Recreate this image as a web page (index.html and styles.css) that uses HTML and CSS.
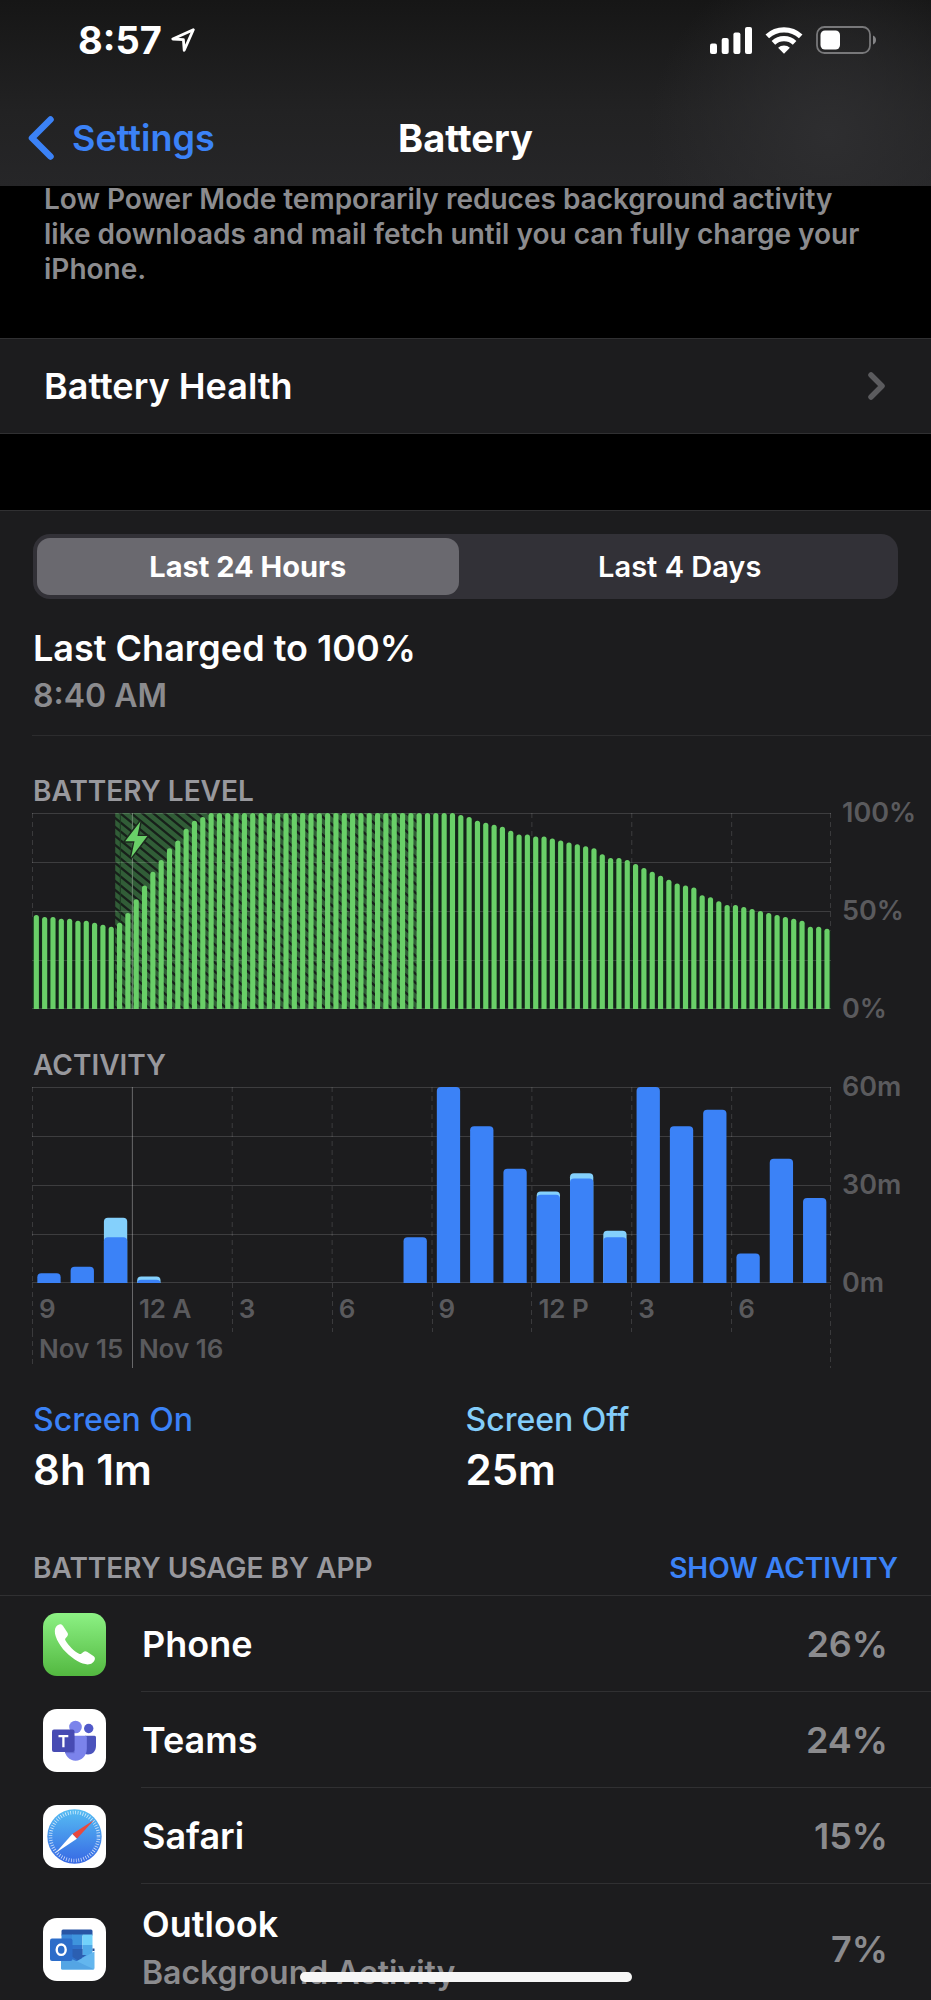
FILE: index.html
```html
<!DOCTYPE html>
<html lang="en">
<head>
<meta charset="utf-8">
<meta name="viewport" content="width=device-width, initial-scale=1">
<title>Battery</title>
<link rel="stylesheet" href="styles.css">
</head>
<body>
<div class="screen">
  <header class="topbar">
    <div class="status">
      <div class="status-left">
        <span class="clock">8:57</span>
        <svg class="location" viewBox="0 0 24 24" width="24" height="24" aria-hidden="true"><path d="M22.3 1.7 1.800 11l10.600.7.8 10.600z" fill="none" stroke="#fff" stroke-width="2.800" stroke-linejoin="round"/></svg>
      </div>
      <div class="status-right">
        <svg viewBox="0 0 42 27" width="42" height="27" aria-hidden="true"><g fill="#fff"><rect y="16.500" width="7" height="10.500" rx="2"/><rect x="11.700" y="11" width="7" height="16" rx="2"/><rect x="23.400" y="5.500" width="7" height="21.500" rx="2"/><rect x="35" width="7" height="27" rx="2"/></g></svg>
        <svg viewBox="0 0 38 27" width="38" height="27" aria-hidden="true"><g fill="none" stroke="#fff" stroke-width="5.200"><path d="M2.300 9.400a24.500 24.500 0 0 1 33.400 0"/><path d="M8.400 15.800a15.500 15.500 0 0 1 21.200 0"/></g><path d="M19 26.800l-5.900-6a8.600 8.600 0 0 1 11.800 0z" fill="#fff"/></svg>
        <svg viewBox="0 0 61 28" width="61" height="28" aria-hidden="true"><rect x="1" y="1" width="53" height="26" rx="7.500" fill="none" stroke="#78787a" stroke-width="1.800"/><rect x="4.500" y="4.500" width="19.500" height="19" rx="4.500" fill="#fff"/><path d="M57 9.500q3 1.200 3 4.500t-3 4.500z" fill="#858587"/></svg>
      </div>
    </div>
    <nav class="nav">
      <a class="back" href="#settings"><svg viewBox="0 0 26 44" width="26" height="44" aria-hidden="true"><path d="M22.500 3.500 4 22l18.500 18.500" fill="none" stroke="#3b82f7" stroke-width="6.500" stroke-linecap="round" stroke-linejoin="round"/></svg>Settings</a>
      <h1 class="title">Battery</h1>
    </nav>
  </header>

  <main class="content">
    <p class="note">Low Power Mode temporarily reduces background activity like downloads and mail fetch until you can fully charge your iPhone.</p>

    <a class="link-row" href="#health">Battery Health<svg viewBox="0 0 17 28" width="17" height="28" aria-hidden="true"><path d="M3 3l11 11L3 25" fill="none" stroke="#5b5b5e" stroke-width="5.500" stroke-linecap="round" stroke-linejoin="round"/></svg></a>

    <section class="panel">
      <div class="segmented">
        <button class="segment selected" type="button" aria-pressed="true">Last 24 Hours</button>
        <button class="segment" type="button" aria-pressed="false">Last 4 Days</button>
      </div>

      <div class="charged">
        <h2 class="charged-title">Last Charged to 100%</h2>
        <p class="charged-time">8:40 AM</p>
      </div>

      <div class="charts">
        <h3 class="caption">BATTERY LEVEL</h3>
        <div class="chart">
          <svg class="plot" id="level" role="img" aria-label="Battery level"></svg>
          <div class="scale"><span>100%</span><span>50%</span><span>0%</span></div>
        </div>

        <h3 class="caption">ACTIVITY</h3>
        <div class="chart">
          <div class="activity">
            <svg class="plot" id="activity" role="img" aria-label="Activity"></svg>
            <div class="hours"><span>9</span><span class="midnight">12 A</span><span>3</span><span>6</span><span>9</span><span>12 P</span><span>3</span><span>6</span></div>
            <div class="days"><span>Nov 15</span><span class="midnight">Nov 16</span></div>
          </div>
          <div class="scale"><span>60m</span><span>30m</span><span>0m</span></div>
        </div>
      </div>

      <div class="totals">
        <div><p class="total-label on">Screen On</p><p class="total">8h 1m</p></div>
        <div><p class="total-label off">Screen Off</p><p class="total">25m</p></div>
      </div>

      <div class="usage-head">
        <h3 class="caption">BATTERY USAGE BY APP</h3>
        <button class="toggle" type="button">SHOW ACTIVITY</button>
      </div>

      <ul class="apps">
        <li class="app">
          <svg class="app-icon" viewBox="0 0 63 63" aria-hidden="true">
            <defs><linearGradient id="gp" x2="0" y2="1"><stop stop-color="#8cf184"/><stop offset="1" stop-color="#53b840"/></linearGradient></defs>
            <rect width="63" height="63" rx="14" fill="url(#gp)"/>
            <path d="M12.200 15.500c1-2.300 2.800-4 4.800-4.200 1.300-.1 2.200.5 2.900 1.500l4.600 7c.8 1.300.6 2.400-.4 3.600l-1.500 1.900c-.6.8-.6 1.500-.1 2.300 1.600 2.800 3.700 5.300 6.100 7.600s5 4.200 7.500 5.500c.9.500 1.700.4 2.400-.2l1.900-1.600c1.100-.9 2.300-1 3.600-.1l6.400 4.300c1.300.9 1.800 1.900 1.400 3.300-.8 2.900-3.700 4.900-7 5-5.800.1-14.500-4.700-22-12.300C15.500 31.500 10.300 21.500 12.200 15.500z" fill="#fff"/>
          </svg>
          <div class="app-body"><span class="app-name">Phone</span><span class="share">26%</span></div>
        </li>
        <li class="app">
          <svg class="app-icon" viewBox="0 0 63 63" aria-hidden="true">
            <rect width="63" height="63" rx="14" fill="#fff"/>
            <circle cx="45.700" cy="19.500" r="4.700" fill="#5059c9"/>
            <path d="M42 26.700h9.500q1.500 0 1.500 1.500v8.800c0 5-3.700 8.500-8 8.500q-2 0-3.500-.7z" fill="#4b53bc"/>
            <circle cx="32.500" cy="18" r="6.300" fill="#7b83eb"/>
            <path d="M22 26.700h20.300q1.500 0 1.500 1.500V40c0 6.500-5 11.800-11.200 11.800S21.500 46.500 21.500 40z" fill="#7b83eb"/>
            <path d="M22 26.700h9.500v17.500H22z" fill="#464eb0" opacity=".45"/>
            <rect x="9" y="20.500" width="22.500" height="22.500" rx="2" fill="#474bb3"/>
            <path d="M15.500 27.200h9.800M20.400 27.200v11" stroke="#fff" stroke-width="2.300" fill="none"/>
          </svg>
          <div class="app-body"><span class="app-name">Teams</span><span class="share">24%</span></div>
        </li>
        <li class="app">
          <svg class="app-icon" viewBox="0 0 63 63" aria-hidden="true">
            <defs><linearGradient id="gs" x2="0" y2="1"><stop stop-color="#56bdf3"/><stop offset="1" stop-color="#3768e4"/></linearGradient></defs>
            <rect width="63" height="63" rx="14" fill="#fff"/>
            <circle cx="31.500" cy="31.500" r="27.200" fill="url(#gs)"/>
            <circle cx="31.500" cy="31.500" r="24" fill="none" stroke="#fff" stroke-width="3.600" stroke-dasharray=".8 1.713" opacity=".75"/>
            <path d="M51 15 29.300 28.900l4.600 4.800z" fill="#e8493f"/>
            <path d="M12.500 48 29.300 28.900l4.600 4.800z" fill="#fff"/>
          </svg>
          <div class="app-body"><span class="app-name">Safari</span><span class="share">15%</span></div>
        </li>
        <li class="app tall">
          <svg class="app-icon" viewBox="0 0 63 63" aria-hidden="true">
            <rect width="63" height="63" rx="14" fill="#fff"/>
            <path d="M20 11.500h28q1.500 0 1.500 1.500v4.500h-31V13q0-1.500 1.500-1.500z" fill="#2855a4"/>
            <path d="M18.500 16.500h11V46h-11z" fill="#3b88d8"/>
            <path d="M29 16.500h10.500V27H29z" fill="#3e94dd"/><path d="M39.500 16.500h10V27h-10z" fill="#72d2fb"/>
            <path d="M29 27h10.500v19H29z" fill="#2f71ca"/><path d="M39.500 27h10v19h-10z" fill="#4fa9e8"/>
            <path d="M49.500 30.500h2v2.500h-2z" fill="#234a91"/>
            <path d="M29 31h10.500v6h4L35 42.500 26.500 37H29z" fill="#2b5fb2"/>
            <path d="M51.500 33.500V50q0 1.500-1.500 1.500H19.500q-1.500 0-1.500-1.500V43l16 0z" fill="#63b6ee"/>
            <path d="M18 36 51 51.200 50 51.500H19.500q-1.500 0-1.500-1.500z" fill="#54a5e4"/>
            <rect x="7" y="20.500" width="22.500" height="22.500" rx="2" fill="#2c6dc9"/>
            <ellipse cx="18.200" cy="31.700" rx="4.500" ry="5.200" fill="none" stroke="#fff" stroke-width="2.400"/>
          </svg>
          <div class="app-body"><span class="app-name">Outlook<small>Background Activity</small></span><span class="share">7%</span></div>
        </li>
      </ul>
    </section>
  </main>
  <div class="home-bar"></div>
</div>
<script src="charts.js"></script>
</body>
</html>
```
FILE: styles.css
```css
* { box-sizing: border-box; margin: 0; padding: 0; }

body {
  background: #000;
  color: #fff;
  font-family: Inter, "Liberation Sans", sans-serif;
  font-weight: 600;
}

svg { display: block; flex: none; }
a { text-decoration: none; }
button { border: 0; background: none; color: inherit; font: inherit; }

.screen {
  height: 100vh;
  overflow-y: auto;
  scrollbar-width: none;
}

/* Status and navigation bars */
.topbar {
  position: sticky;
  top: 0;
  z-index: 2;
  background:
    radial-gradient(circle 180px at 89% 135px, #2e2e30, transparent),
    linear-gradient(#161616, #222223 60%, #262628);
}

.status {
  display: flex;
  justify-content: space-between;
  align-items: center;
  height: 80px;
  padding: 0 54px 0 78px;
}

.status-left { display: flex; align-items: center; gap: 9px; }
.status-right { display: flex; align-items: center; gap: 13px; }
.clock { font-size: 38px; font-weight: 700; }

.nav {
  display: grid;
  grid-template-columns: 1fr auto 1fr;
  align-items: center;
  height: 106px;
  padding: 10px 28px 0;
}

.back {
  display: flex;
  align-items: center;
  gap: 18px;
  color: #3b82f7;
  font-size: 36px;
}

.title { font-size: 38px; font-weight: 700; }

.content { margin-top: -4px; }

.note {
  padding: 0 56px 51px 44px;
  color: #8b8b8e;
  font-size: 28px;
  line-height: 35px;
}

.link-row {
  display: flex;
  justify-content: space-between;
  align-items: center;
  height: 96px;
  margin-bottom: 76px;
  padding: 0 46px 0 44px;
  border: solid #303032;
  border-width: 1px 0;
  background: #1c1c1e;
  color: #fff;
  font-size: 36px;
}

.panel {
  padding-top: 23px;
  border-top: 1px solid #303032;
  background: #1c1c1e;
}

/* Period switch */
.segmented {
  display: grid;
  grid-template-columns: 1fr 1fr;
  height: 65px;
  margin: 0 33px;
  padding: 4px;
  border-radius: 17px;
  background: #323137;
}

.segment {
  border-radius: 13px;
  font-size: 29px;
}

.segment.selected { margin-right: 7px; background: #6a696f; font-weight: 700; }

.charged {
  margin-left: 32px;
  padding: 24px 0 16px 1px;
  border-bottom: 1px solid #2c2c2e;
}

.charged-title { font-size: 36px; font-weight: 600; line-height: 50px; }
.charged-time { color: #8b8b8e; font-size: 32px; line-height: 46px; }

/* Charts */
.caption {
  padding-left: 1px;
  color: #98989d;
  font-size: 28px;
  font-weight: 600;
  line-height: 34px;
}

.charts { padding: 38px 0 0 32px; }
.charts .caption { margin-bottom: 5px; }
.chart { display: grid; grid-template-columns: 1fr 100px; }
.chart + .caption { margin-top: 39px; }
.plot { width: 100%; height: 196px; }

.scale {
  display: flex;
  flex-direction: column;
  justify-content: space-between;
  height: 236px;
  margin: -20px 0;
  padding-left: 11px;
  color: #5a5a5d;
  font-size: 27px;
  line-height: 40px;
}

.activity {
  background: repeating-linear-gradient(#3a3a3c 0 5px, transparent 5px 9px) right top / 1px 100% no-repeat;
}

.hours, .days {
  display: grid;
  grid-template-columns: repeat(8, 1fr);
  color: #5a5a5d;
  font-size: 26px;
}

.hours span, .days span {
  padding-left: 7px;
  background: repeating-linear-gradient(#3a3a3c 0 5px, transparent 5px 9px) left top / 1px 100% no-repeat;
  white-space: nowrap;
}

.hours span { height: 49px; padding-top: 6px; line-height: 40px; }
.days span { height: 36px; line-height: 34px; }
.hours .midnight, .days .midnight { background-image: linear-gradient(#68686a, #68686a); }

.totals {
  display: grid;
  grid-template-columns: 1fr 1fr;
  padding: 32px 33px 0;
}

.total-label { font-size: 32px; font-weight: 500; line-height: 40px; }
.total-label.on { color: #3b82f7; }
.total-label.off { color: #83cdfa; }
.total { font-size: 42px; line-height: 59px; }

/* App list */
.usage-head {
  display: flex;
  justify-content: space-between;
  padding: 52px 33px 10px 32px;
  border-bottom: 1px solid #303032;
}

.toggle { color: #3b82f7; font-size: 28px; line-height: 34px; }

.apps { list-style: none; }
.app { display: flex; align-items: center; padding-left: 43px; }
.app-icon { width: 63px; height: 63px; margin-right: 35px; }

.app-body {
  display: flex;
  flex: 1;
  justify-content: space-between;
  align-items: center;
  height: 96px;
  padding: 0 43px 0 1px;
  border-bottom: 1px solid #303032;
  font-size: 36px;
}

.app.tall .app-body { height: 130px; }
.app-name { line-height: 48px; }
.app-name small { display: block; color: #8b8b8e; font-size: 32px; line-height: 50px; }
.share { color: #8b8b8e; }

.home-bar {
  position: fixed;
  bottom: 18px;
  left: 50%;
  z-index: 3;
  width: 332px;
  height: 10px;
  margin-left: -166px;
  border-radius: 5px;
  background: #f6f6f6;
}
```
FILE: charts.js
```js
const SVG = "http://www.w3.org/2000/svg";
const HEIGHT = 196;

const level = [48, 47, 47, 46, 46, 45, 45, 44, 43, 42, 44, 49, 56, 63, 70, 76, 82, 86, 92, 96, 98,
  ...Array(30).fill(100),
  99, 98, 96, 95, 94, 93, 91, 89, 89, 88, 88, 87, 86, 85, 84, 83, 82, 79, 77, 77, 76,
  74, 72, 70, 68, 66, 64, 63, 62, 58, 57, 55, 53, 53, 52, 51, 50, 49, 48, 47, 46, 45, 42, 42, 41];

// Minutes per hour: [screen on, screen on + off]
const activity = [[3, 3], [5, 5], [14, 20], [1, 2], [0, 0], [0, 0], [0, 0], [0, 0], [0, 0], [0, 0],
  [0, 0], [14, 14], [60, 60], [48, 48], [35, 35], [27, 28], [32, 33.6], [14, 16], [60, 60],
  [48, 48], [53, 53], [9, 9], [38, 38], [26, 26]];

function add(parent, tag, attrs) {
  const el = document.createElementNS(SVG, tag);
  for (const key in attrs) el.setAttribute(key, attrs[key]);
  parent.appendChild(el);
  return el;
}

function columns(svg) {
  for (let i = 0; i <= 8; i++) {
    const x = i * 12.5 + "%";
    const midnight = i === 1;
    const line = add(svg, "rect", { x, y: 0, width: 1, height: HEIGHT, fill: midnight ? "#68686a" : "url(#dash)" });
    if (i === 8) line.setAttribute("transform", "translate(-1 0)");
  }
}

function rows(svg) {
  for (let i = 0; i <= 4; i++) {
    add(svg, "rect", { x: 0, y: Math.min(i * 49, HEIGHT - 1), width: "100%", height: 1, fill: "#fff", opacity: 0.15 });
  }
}

// Rounded top, square bottom: the bar runs past the lower edge, where the plot clips it.
function bar(svg, x, width, share, radius, fill) {
  add(svg, "rect", { x: x + "%", y: HEIGHT * (1 - share), width: width + "%", height: HEIGHT * share + 10, rx: radius, fill });
}

const levelPlot = document.getElementById("level");
const defs = add(levelPlot, "defs", {});
const dash = add(defs, "pattern", { id: "dash", width: 4, height: 9, patternUnits: "userSpaceOnUse" });
add(dash, "rect", { width: 4, height: 5, fill: "#3a3a3c" });
const hatch = add(defs, "pattern", { id: "hatch", width: 11, height: 9, patternUnits: "userSpaceOnUse" });
add(hatch, "rect", { width: 11, height: 9, fill: "#315d37" });
add(hatch, "path", { d: "M-11 -9 22 18M-11 0 11 18M0 -9 22 9", stroke: "#17201a", "stroke-width": 2.3 });

const step = 100 / level.length;
columns(levelPlot);
level.forEach((value, i) => {
  const share = value / 100;
  add(levelPlot, "rect", { x: i * step + "%", y: HEIGHT * (1 - share) + 2, width: step + "%", height: HEIGHT * share, fill: "#14261a" });
});
add(levelPlot, "rect", { x: 10 * step + "%", y: 0, width: 36.5 * step + "%", height: HEIGHT, fill: "url(#hatch)" });
add(levelPlot, "rect", { x: 10.55 * step + "%", y: 0, width: 1, height: HEIGHT, fill: "#1c3a20" });
add(levelPlot, "rect", { x: "12.5%", y: 0, width: 1, height: HEIGHT, fill: "#6d8570" });
rows(levelPlot);
level.forEach((value, i) => bar(levelPlot, (i + 0.21) * step, step * 0.62, value / 100, 2.5, "#69cf68"));

const bolt = add(levelPlot, "svg", { x: "11.3%", y: 5, width: 28, height: 42, viewBox: "0 0 24 36" });
add(bolt, "path", { d: "M15.500 3 2.500 20h8l-3 14L21.500 15.500h-8.500z", fill: "#69cf68", stroke: "#1c2a1e", "stroke-width": 2.5, "paint-order": "stroke" });

const activityPlot = document.getElementById("activity");
columns(activityPlot);
rows(activityPlot);
const hour = 100 / activity.length;
activity.forEach(([on, total], i) => {
  const x = (i + 0.16) * hour;
  if (total > on) bar(activityPlot, x, hour * 0.7, total / 60, 4, "#84d0fc");
  if (on) bar(activityPlot, x, hour * 0.7, on / 60, 4, "#3b82f7");
});
```
